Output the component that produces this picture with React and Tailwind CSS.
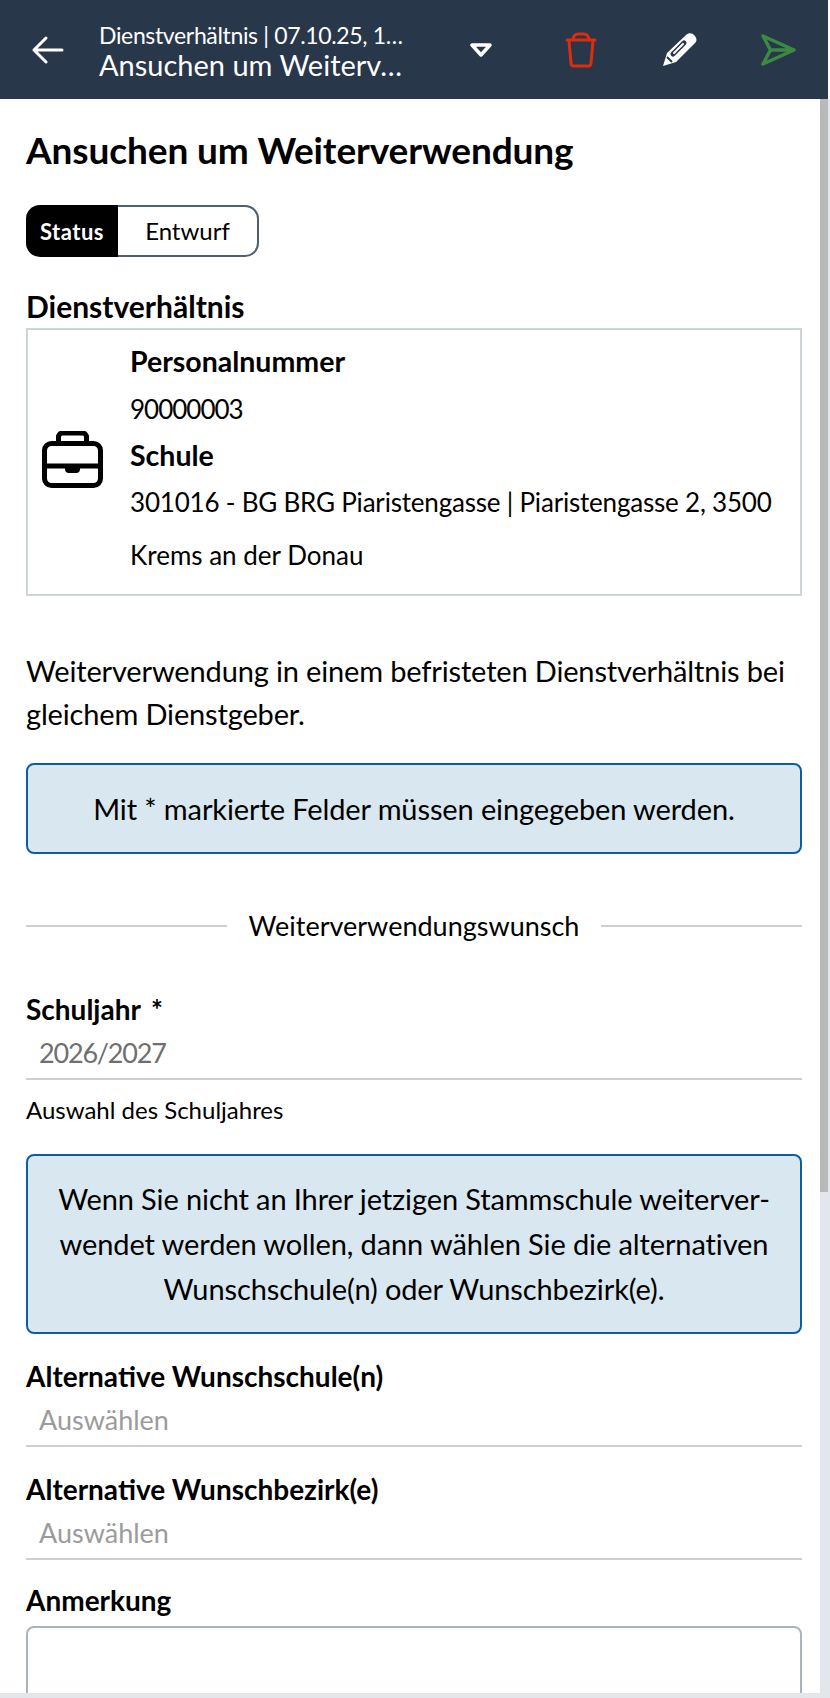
import React from "react";

const font = { fontFamily: "Lato, 'Noto Sans', sans-serif" };

const Notice = ({ children, className }) => (
  <div className={`rounded-lg border-2 border-[#0b5f9e] bg-[#d9e8f0] text-center text-[29px] leading-[45px] tracking-[-0.11px] text-black ${className}`}>
    {children}
  </div>
);

const SelectField = ({ label, value, muted, className }) => (
  <div className={className}>
    <div className="text-[28px] font-bold leading-[36px] text-black">{label}</div>
    <div className={`border-b-2 border-[#cdcfd1] pl-[13px] text-[27px] leading-[51px] ${muted ? "text-[#9b9b9b]" : "tracking-[-1.2px] text-[#6f6f6f]"}`}>
      {value}
    </div>
  </div>
);

export default function App() {
  return (
    <div className="flex h-[1698px] w-[830px] flex-col overflow-hidden bg-white" style={font}>
      <div className="flex min-h-0 flex-1 flex-col">
        <header className="flex h-[99px] w-[828px] shrink-0 items-center bg-[#283749] text-white">
          <svg className="ml-[32px] h-[28px] w-[32px]" viewBox="0 0 32 28" fill="none" stroke="white" strokeWidth="3" strokeLinecap="round" strokeLinejoin="round">
            <path d="M2 14h28M14 2 2 14l12 12" />
          </svg>
          <div className="ml-[35px] w-[304px] whitespace-nowrap">
            <div className="text-[23px] leading-[30px] tracking-[-0.35px]">Dienstverhältnis | 07.10.25, 1…</div>
            <div className="text-[29px] leading-[30px]">Ansuchen um Weiterv…</div>
          </div>
          <svg className="ml-[67px] h-[14px] w-[22px]" viewBox="0 0 22 14" fill="none" stroke="white" strokeWidth="3.5" strokeLinejoin="round">
            <path d="M2 2h18l-9 10z" />
          </svg>
          <svg className="ml-[73px] h-[36px] w-[32px]" viewBox="0 0 32 36" fill="none" stroke="#dd2c0e" strokeWidth="3" strokeLinecap="round" strokeLinejoin="round">
            <path d="M2 8h28M8 7c1-4 3-5 5-5h6c2 0 4 1 5 5M4 9l2 22c0 2 1 3 3 3h14c2 0 3-1 3-3l2-22" />
          </svg>
          <svg className="ml-[65px] h-[35px] w-[35px]" viewBox="0 0 35 35">
            <path fill="white" d="M1 34 5 21 24 3c3-3 7-2 9 1s2 5 0 7L14 30z" />
            <path stroke="#283749" strokeWidth="5" strokeLinecap="round" d="M11 22 22 11" />
            <path stroke="white" strokeWidth="2" strokeLinecap="round" d="M12 21 21 12" />
            <path stroke="#283749" strokeWidth="2" d="M5 25l5 5" />
          </svg>
          <svg className="ml-[63px] h-[32px] w-[36px]" viewBox="0 0 36 32" fill="none" stroke="#3c8a42" strokeWidth="3.5" strokeLinejoin="round" strokeLinecap="round">
            <path d="M34 16 3 2l7.5 14L3 30zM10.5 16H34" />
          </svg>
        </header>

        <div className="flex min-h-0 flex-1">
          <main className="w-[820px] pl-[26px] pr-[18px] pt-[26px]">
            <h1 className="text-[37px] font-bold leading-[50px] tracking-[-0.1px] text-black">Ansuchen um Weiterverwendung</h1>

            <div className="mt-[30px] flex h-[52px] w-[233px]">
              <div className="flex w-[92px] items-center justify-center rounded-l-[14px] bg-black text-[22px] font-bold tracking-[0.5px] text-white">Status</div>
              <div className="flex flex-1 items-center justify-center rounded-r-[14px] border-2 border-l-0 border-[#4d6070] text-[24px] text-black">Entwurf</div>
            </div>

            <div className="mt-[31px] text-[30px] font-bold leading-[36px] text-black">Dienstverhältnis</div>
            <div className="mt-[4px] flex h-[268px] items-center border-2 border-[#ccd6d8]">
              <svg className="mb-[6px] ml-[14px] h-[57px] w-[61px] shrink-0" viewBox="0 0 61 57" fill="none" stroke="black" strokeWidth="5" strokeLinejoin="round">
                <path d="M16.5 12V6a4 4 0 0 1 4-4h20a4 4 0 0 1 4 4v6" />
                <rect x="2.5" y="12.5" width="56" height="42" rx="7" />
                <path d="M2.5 35h56" />
                <path d="M23 35h15v3a4 4 0 0 1-4 4h-7a4 4 0 0 1-4-4z" fill="black" stroke="none" />
              </svg>
              <div className="mb-[4px] ml-[27px] text-[26px] text-black">
                <div className="text-[28.5px] font-bold leading-[48px]">Personalnummer</div>
                <div className="leading-[48px] tracking-[-1px]">90000003</div>
                <div className="text-[28.5px] font-bold leading-[44px]">Schule</div>
                <div className="leading-[50px] tracking-[-0.2px]">301016 - BG BRG Piaristengasse | Piaristengasse 2, 3500</div>
                <div className="leading-[56px]">Krems an der Donau</div>
              </div>
            </div>

            <p className="mt-[53px] text-[29px] leading-[43px] tracking-[-0.15px] text-black">
              Weiterverwendung in einem befristeten Dienstverhältnis bei gleichem Dienstgeber.
            </p>

            <Notice className="mt-[28px] py-[21px]">Mit * markierte Felder müssen eingegeben werden.</Notice>

            <div className="mt-[54px] flex items-center gap-[22px]">
              <div className="h-[2px] flex-1 bg-[#cdcfd1]" />
              <div className="text-[27px] leading-[36px] text-black">Weiterverwendungswunsch</div>
              <div className="h-[2px] flex-1 bg-[#cdcfd1]" />
            </div>

            <SelectField
              className="mt-[47px]"
              label={<>Schuljahr<span className="ml-[10px]">*</span></>}
              value="2026/2027"
            />
            <div className="mt-[15px] text-[24px] leading-[30px] text-black">Auswahl des Schuljahres</div>

            <Notice className="mt-[29px] whitespace-nowrap pb-[21px] pt-[20px]">
              Wenn Sie nicht an Ihrer jetzigen Stammschule weiterver-<br />
              wendet werden wollen, dann wählen Sie die alternativen<br />
              Wunschschule(n) oder Wunschbezirk(e).
            </Notice>

            <SelectField className="mt-[24px]" label="Alternative Wunschschule(n)" value="Auswählen" muted />
            <SelectField className="mt-[24px]" label="Alternative Wunschbezirk(e)" value="Auswählen" muted />

            <div className="mt-[22px] text-[28px] font-bold leading-[36px] text-black">Anmerkung</div>
            <div className="mt-[8px] h-[120px] rounded-lg border-2 border-[#aab5bb]" />
          </main>

          <div className="w-[10px] bg-[#e3e6eb]">
            <div className="h-[1093px] w-[8px] bg-[#b9b9b9]" />
          </div>
        </div>
      </div>
      <div className="h-[5px] shrink-0 bg-[#e3e6eb]" />
    </div>
  );
}
